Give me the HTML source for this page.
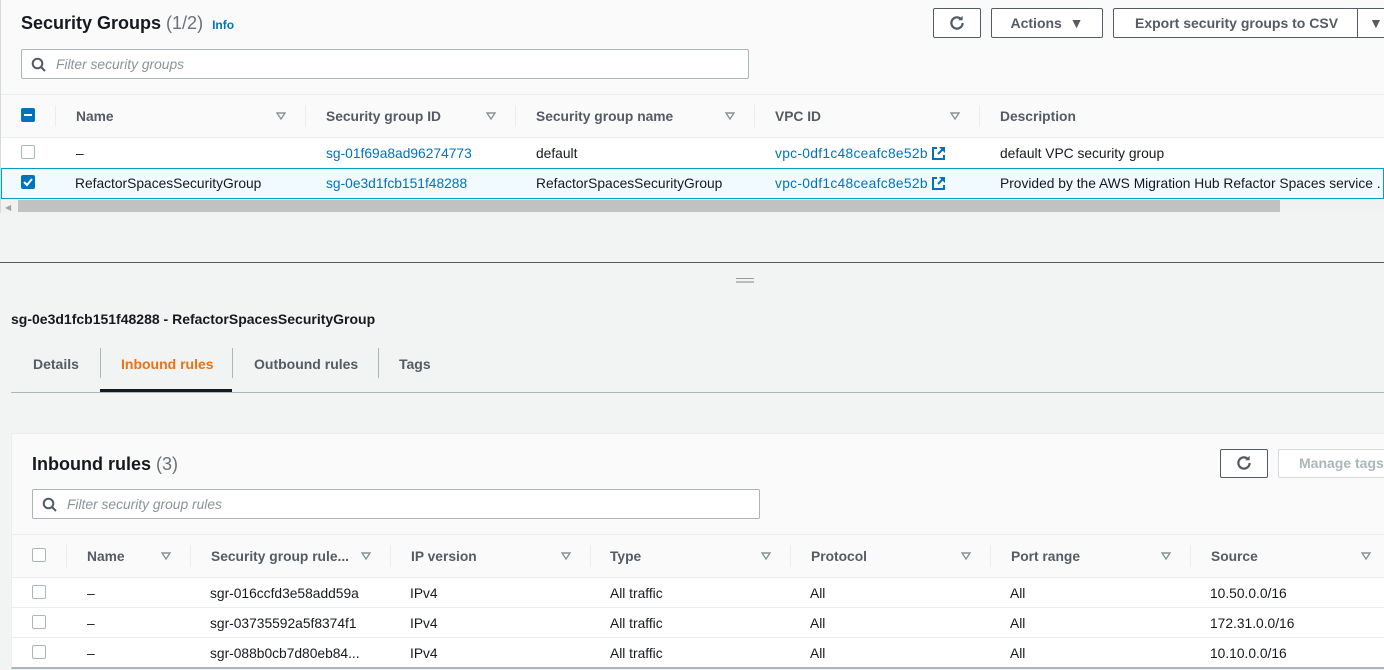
<!DOCTYPE html>
<html><head><meta charset="utf-8">
<style>
*{box-sizing:border-box;margin:0;padding:0}
body{width:1384px;height:670px;overflow:hidden;background:#f2f3f3;font-family:"Liberation Sans",sans-serif;font-size:13.8px;color:#16191f;position:relative}
.a{position:absolute;white-space:nowrap;line-height:16px;margin-top:1px}
.b{font-weight:bold;color:#545b64}
.lk{color:#0073bb}
.box{position:absolute;border:1px solid #aab7b8;background:#fff}
.cb{position:absolute;width:14px;height:14px;border:1px solid #aab7b8;border-radius:2px;background:#fff}
.cbf{position:absolute;width:14px;height:14px;border-radius:2px;background:#0073bb}
.hl{position:absolute;height:1px;background:#eaeded}
.sep{position:absolute;width:1px;height:22px;background:#eaeded}
.btn{position:absolute;border:1px solid #545b64;border-radius:2px;background:#fff;font-weight:bold;color:#545b64;text-align:center;line-height:28px;font-size:14px}
.srt{position:absolute;width:10px;height:8px}
.ph{font-style:italic;color:#879596}
</style></head><body>
<div style="position:absolute;left:0;top:0;width:1384px;height:213px;background:#fafafa;border-left:1px solid #d5dbdb"></div>
<div class="a" style="left:21px;top:11px;font-size:18px;line-height:22px;font-weight:bold">Security Groups <span style="font-weight:normal;color:#687078">(1/2)</span> <span style="font-size:12px;color:#0073bb;margin-left:4px">Info</span></div>
<div class="btn" style="left:933px;top:8px;width:48px;height:30px"><svg width="18" height="18" viewBox="0 0 16 16" style="vertical-align:-4px"><path d="M13 8a5 5 0 1 1-1.5-3.6" fill="none" stroke="#545b64" stroke-width="2"/><path d="M13 1.5v4h-4z" fill="#545b64"/></svg></div>
<div class="btn" style="left:991px;top:8px;width:112px;height:30px">Actions&nbsp; ▼</div>
<div class="btn" style="left:1113px;top:8px;width:280px;height:30px;text-align:left;padding-left:21px">Export security groups to CSV<span style="position:absolute;left:243px;top:0;height:28px;width:1px;background:#545b64"></span><span style="position:absolute;left:255px;top:0">▼</span></div>
<div class="box" style="left:21px;top:49px;width:728px;height:30px;border-radius:2px"></div>
<svg class="a" style="left:31px;top:56px" width="16" height="16" viewBox="0 0 16 16"><circle cx="6.5" cy="6.5" r="4.8" fill="none" stroke="#545b64" stroke-width="2"/><path d="M10 10l4 4" stroke="#545b64" stroke-width="2"/></svg>
<div class="a ph" style="left:56px;top:56px">Filter security groups</div>
<div class="hl" style="left:1px;top:94px;width:1383px"></div>
<div class="cbf" style="left:21px;top:108px"><div style="position:absolute;left:3px;top:6px;width:8px;height:2px;background:#fff"></div></div>
<div class="sep" style="left:55px;top:105px"></div>
<div class="a b" style="left:76px;top:108px">Name</div>
<div class="sep" style="left:305px;top:105px"></div>
<div class="a b" style="left:326px;top:108px">Security group ID</div>
<div class="sep" style="left:515px;top:105px"></div>
<div class="a b" style="left:536px;top:108px">Security group name</div>
<div class="sep" style="left:754px;top:105px"></div>
<div class="a b" style="left:775px;top:108px">VPC ID</div>
<div class="sep" style="left:979px;top:105px"></div>
<div class="a b" style="left:1000px;top:108px">Description</div>
<div style="position:absolute;left:1px;top:137px;width:1383px;height:31px;background:#fff;border-top:1px solid #eaeded"></div>
<div style="position:absolute;left:1px;top:168px;width:1383px;height:31px;background:#f1faff;border:1px solid #00a1c9"></div>
<div class="cb" style="left:21px;top:145px"></div>
<div class="a" style="left:76px;top:145px">–</div>
<div class="a lk" style="left:326px;top:145px">sg-01f69a8ad96274773</div>
<div class="a" style="left:536px;top:145px">default</div>
<div class="a lk" style="left:775px;top:145px;letter-spacing:0.3px">vpc-0df1c48ceafc8e52b</div>
<div class="a" style="left:1000px;top:145px">default VPC security group</div>
<div class="cbf" style="left:21px;top:175px"><svg width="14" height="14" viewBox="0 0 14 14"><path d="M3 7l3 3 5-6" fill="none" stroke="#fff" stroke-width="2"/></svg></div>
<div class="a" style="left:75px;top:175px">RefactorSpacesSecurityGroup</div>
<div class="a lk" style="left:326px;top:175px">sg-0e3d1fcb151f48288</div>
<div class="a" style="left:536px;top:175px">RefactorSpacesSecurityGroup</div>
<div class="a lk" style="left:775px;top:175px;letter-spacing:0.3px">vpc-0df1c48ceafc8e52b</div>
<div class="a" style="left:1000px;top:175px">Provided by the AWS Migration Hub Refactor Spaces service .</div>
<svg class="a" style="left:931px;top:145px" width="15" height="15" viewBox="0 0 15 15"><path d="M6 2H2v11h11V9" fill="none" stroke="#0073bb" stroke-width="2"/><path d="M8 1h6v6z" fill="#0073bb"/><path d="M13 2L7 8" stroke="#0073bb" stroke-width="2"/></svg>
<svg class="a" style="left:931px;top:175px" width="15" height="15" viewBox="0 0 15 15"><path d="M6 2H2v11h11V9" fill="none" stroke="#0073bb" stroke-width="2"/><path d="M8 1h6v6z" fill="#0073bb"/><path d="M13 2L7 8" stroke="#0073bb" stroke-width="2"/></svg>
<div style="position:absolute;left:1px;top:199px;width:1383px;height:14px;background:#f1f1f1"></div>
<div style="position:absolute;left:18px;top:200px;width:1262px;height:12px;background:#c1c1c1"></div>
<div class="a" style="left:5px;top:199px;font-size:8px;color:#a3a3a3">◀</div>
<div style="position:absolute;left:0;top:262px;width:1384px;height:1px;background:#545b64"></div>
<div style="position:absolute;left:736px;top:278px;width:18px;height:1px;background:#999"></div>
<div style="position:absolute;left:736px;top:281px;width:18px;height:2px;background:#bbb"></div>
<div class="a" style="left:11px;top:310px;font-weight:bold;font-size:14px">sg-0e3d1fcb151f48288 - RefactorSpacesSecurityGroup</div>
<div class="a b" style="left:33px;top:355px;font-size:14px">Details</div>
<div style="position:absolute;left:100px;top:348px;width:1px;height:30px;background:#aab7b8"></div>
<div class="a" style="left:121px;top:355px;font-size:14px;font-weight:bold;color:#ec7211">Inbound rules</div>
<div style="position:absolute;left:232px;top:348px;width:1px;height:30px;background:#aab7b8"></div>
<div class="a b" style="left:254px;top:355px;font-size:14px">Outbound rules</div>
<div style="position:absolute;left:378px;top:348px;width:1px;height:30px;background:#aab7b8"></div>
<div class="a b" style="left:399px;top:355px;font-size:14px">Tags</div>
<div style="position:absolute;left:11px;top:392px;width:1373px;height:1px;background:#aab7b8"></div>
<div style="position:absolute;left:100px;top:389px;width:132px;height:3px;background:#16191f"></div>
<div style="position:absolute;left:11px;top:433px;width:1380px;height:236px;background:#fafafa;border:1px solid #eaeded;border-bottom:2px solid #aab7b8"></div>
<div class="a" style="left:32px;top:452px;font-size:18px;line-height:22px;font-weight:bold">Inbound rules <span style="font-weight:normal;color:#687078">(3)</span></div>
<div class="btn" style="left:1220px;top:449px;width:48px;height:29px;line-height:27px"><svg width="18" height="18" viewBox="0 0 16 16" style="vertical-align:-4px"><path d="M13 8a5 5 0 1 1-1.5-3.6" fill="none" stroke="#545b64" stroke-width="2"/><path d="M13 1.5v4h-4z" fill="#545b64"/></svg></div>
<div class="btn" style="left:1278px;top:449px;width:120px;height:29px;line-height:27px;border-color:#d5dbdb;color:#aab7b8;text-align:left;padding-left:20px">Manage tags</div>
<div class="box" style="left:32px;top:489px;width:728px;height:30px;border-radius:2px"></div>
<svg class="a" style="left:42px;top:496px" width="16" height="16" viewBox="0 0 16 16"><circle cx="6.5" cy="6.5" r="4.8" fill="none" stroke="#545b64" stroke-width="2"/><path d="M10 10l4 4" stroke="#545b64" stroke-width="2"/></svg>
<div class="a ph" style="left:67px;top:496px">Filter security group rules</div>
<div class="hl" style="left:12px;top:534px;width:1372px"></div>
<div class="cb" style="left:32px;top:548px"></div>
<div class="sep" style="left:66px;top:545px"></div>
<div class="a b" style="left:87px;top:548px">Name</div>
<div class="sep" style="left:190px;top:545px"></div>
<div class="a b" style="left:211px;top:548px">Security group rule...</div>
<div class="sep" style="left:390px;top:545px"></div>
<div class="a b" style="left:411px;top:548px">IP version</div>
<div class="sep" style="left:590px;top:545px"></div>
<div class="a b" style="left:610px;top:548px">Type</div>
<div class="sep" style="left:790px;top:545px"></div>
<div class="a b" style="left:811px;top:548px">Protocol</div>
<div class="sep" style="left:990px;top:545px"></div>
<div class="a b" style="left:1011px;top:548px">Port range</div>
<div class="sep" style="left:1190px;top:545px"></div>
<div class="a b" style="left:1211px;top:548px">Source</div>
<div style="position:absolute;left:12px;top:577px;width:1372px;height:90px;background:#fff;border-top:1px solid #eaeded"></div>
<div class="hl" style="left:12px;top:607px;width:1372px"></div>
<div class="hl" style="left:12px;top:637px;width:1372px"></div>
<div class="cb" style="left:32px;top:585px"></div><div class="a" style="left:87px;top:585px">–</div><div class="a" style="left:210px;top:585px">sgr-016ccfd3e58add59a</div><div class="a" style="left:410px;top:585px">IPv4</div><div class="a" style="left:610px;top:585px">All traffic</div><div class="a" style="left:810px;top:585px">All</div><div class="a" style="left:1010px;top:585px">All</div><div class="a" style="left:1210px;top:585px">10.50.0.0/16</div>
<div class="cb" style="left:32px;top:615px"></div><div class="a" style="left:87px;top:615px">–</div><div class="a" style="left:210px;top:615px">sgr-03735592a5f8374f1</div><div class="a" style="left:410px;top:615px">IPv4</div><div class="a" style="left:610px;top:615px">All traffic</div><div class="a" style="left:810px;top:615px">All</div><div class="a" style="left:1010px;top:615px">All</div><div class="a" style="left:1210px;top:615px">172.31.0.0/16</div>
<div class="cb" style="left:32px;top:645px"></div><div class="a" style="left:87px;top:645px">–</div><div class="a" style="left:210px;top:645px">sgr-088b0cb7d80eb84...</div><div class="a" style="left:410px;top:645px">IPv4</div><div class="a" style="left:610px;top:645px">All traffic</div><div class="a" style="left:810px;top:645px">All</div><div class="a" style="left:1010px;top:645px">All</div><div class="a" style="left:1210px;top:645px">10.10.0.0/16</div>
<svg width="0" height="0" style="position:absolute"><defs><symbol id="s" viewBox="0 0 10 8"><path d="M1 1h8L5 7z" fill="none" stroke="#879596" stroke-width="1.4"/></symbol></defs></svg>
<svg class="srt" style="left:276px;top:112px"><use href="#s"/></svg>
<svg class="srt" style="left:486px;top:112px"><use href="#s"/></svg>
<svg class="srt" style="left:725px;top:112px"><use href="#s"/></svg>
<svg class="srt" style="left:950px;top:112px"><use href="#s"/></svg>
<svg class="srt" style="left:161px;top:552px"><use href="#s"/></svg>
<svg class="srt" style="left:361px;top:552px"><use href="#s"/></svg>
<svg class="srt" style="left:561px;top:552px"><use href="#s"/></svg>
<svg class="srt" style="left:761px;top:552px"><use href="#s"/></svg>
<svg class="srt" style="left:961px;top:552px"><use href="#s"/></svg>
<svg class="srt" style="left:1161px;top:552px"><use href="#s"/></svg>
<svg class="srt" style="left:1361px;top:552px"><use href="#s"/></svg>
</body></html>
